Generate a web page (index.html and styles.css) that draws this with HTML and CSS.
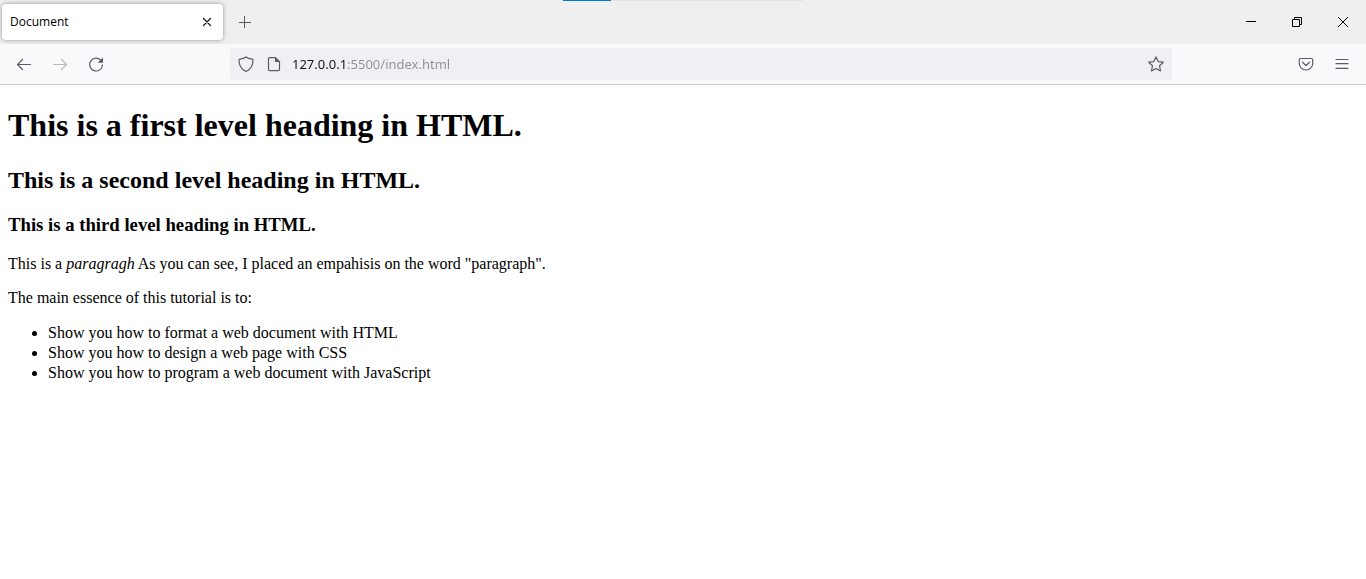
FILE: index.html
```html
<!DOCTYPE html>
<html lang="en">
<head>
<meta charset="utf-8">
<title>Document</title>
<link rel="stylesheet" href="styles.css">
</head>
<body>
<header class="browser">
  <div class="tab-strip">
    <div class="progress"><div class="progress-value"></div></div>
    <div class="tab">
      <span class="tab-title">Document</span>
      <button class="tab-close" type="button" aria-label="Close tab">
        <svg width="10" height="10" viewBox="0 0 10 10"><path d="M1.500 1.500l7 7M8.500 1.500l-7 7"/></svg>
      </button>
    </div>
    <button class="new-tab" type="button" aria-label="New tab">
      <svg width="12" height="12" viewBox="0 0 12 12"><path d="M5.500 0v12M0 6.500h12"/></svg>
    </button>
    <div class="window-buttons">
      <button class="window-button" type="button" aria-label="Minimize">
        <svg width="10" height="10" viewBox="0 0 10 10"><path d="M0 4.500h10"/></svg>
      </button>
      <button class="window-button" type="button" aria-label="Restore">
        <svg width="10" height="10" viewBox="0 0 10 10"><path d="M0.500 2.500h7v7h-7zM2.500 2.500v-2h7v7h-2"/></svg>
      </button>
      <button class="window-button" type="button" aria-label="Close window">
        <svg width="10" height="10" viewBox="0 0 10 10"><path d="M0 0l10 10M10 0L0 10"/></svg>
      </button>
    </div>
  </div>
  <div class="toolbar">
    <nav class="nav-buttons">
      <button class="icon-button" type="button" aria-label="Back">
        <svg width="16" height="16" viewBox="0 0 16 16"><path d="M14.500 8.500h-13M6.500 3.500l-5 5 5 5"/></svg>
      </button>
      <button class="icon-button" type="button" aria-label="Forward" disabled>
        <svg width="16" height="16" viewBox="0 0 16 16"><path d="M1.500 8.500h13M9.500 3.500l5 5-5 5"/></svg>
      </button>
      <button class="icon-button" type="button" aria-label="Reload">
        <svg width="16" height="16" viewBox="0 0 16 16"><path d="M14.500 9A6.400 6.400 0 1 1 12.800 4.200"/><path class="solid" d="M15 1.500v5.300H9.700z"/></svg>
      </button>
    </nav>
    <div class="address-bar">
      <button class="address-icon" type="button" aria-label="Tracking protection">
        <svg width="16" height="16" viewBox="0 0 16 16"><path d="M8 0.900C9.500 2 12 2.800 14.200 3.200 14.900 3.400 15 3.700 15 4.200 14.900 9.500 12.500 13.500 8 15.500 3.500 13.500 1.100 9.500 1 4.200 1 3.700 1.100 3.400 1.800 3.200 4 2.800 6.500 2 8 0.900z"/></svg>
      </button>
      <button class="address-icon" type="button" aria-label="Site information">
        <svg width="16" height="16" viewBox="0 0 16 16"><path d="M3.600 1.600h5.900l4 4v7.900a1.100 1.100 0 0 1-1.100 1.100H3.600a1.100 1.100 0 0 1-1.100-1.100V2.700a1.100 1.100 0 0 1 1.100-1.100z"/><path class="solid" d="M9 1l5 5H9z"/></svg>
      </button>
      <input class="address-input" type="text" aria-label="Address" value="127.0.0.1:5500/index.html">
      <button class="address-icon" type="button" aria-label="Bookmark this page">
        <svg width="16" height="16" viewBox="0 0 16 16"><path d="M8 0.900l2.200 4.700 5.100.6-3.800 3.500 1 5.200L8 12.400l-4.500 2.500 1-5.200L.7 6.200l5.100-.6z"/></svg>
      </button>
    </div>
    <div class="tools">
      <button class="icon-button" type="button" aria-label="Save to Pocket">
        <svg width="16" height="16" viewBox="0 0 16 16"><path d="M2.500 2.500h11a1.200 1.200 0 0 1 1.200 1.200v3.800a6.700 6.500 0 0 1-13.400 0V3.700a1.200 1.200 0 0 1 1.200-1.200z"/><path d="M4.500 6.200L8 9.500l3.500-3.300"/></svg>
      </button>
      <button class="icon-button" type="button" aria-label="Application menu">
        <svg width="16" height="16" viewBox="0 0 16 16"><path d="M2 3.500h12M2 7.700h12M2 12.300h12"/></svg>
      </button>
    </div>
  </div>
</header>
<main class="document">
  <h1>This is a first level heading in HTML.</h1>
  <h2>This is a second level heading in HTML.</h2>
  <h3>This is a third level heading in HTML.</h3>
  <p>This is a <em>paragragh</em> As you can see, I placed an empahisis on the word "paragraph".</p>
  <p>The main essence of this tutorial is to:</p>
  <ul>
    <li>Show you how to format a web document with HTML</li>
    <li>Show you how to design a web page with CSS</li>
    <li>Show you how to program a web document with JavaScript</li>
  </ul>
</main>
</body>
</html>
```
FILE: styles.css
```css
* {
  box-sizing: border-box;
}

body {
  margin: 0;
  background: #fff;
  color: #000;
  font: 16px/18px "Liberation Serif", "Times New Roman", serif;
}

button,
input {
  margin: 0;
  padding: 0;
  border: 0;
  background: none;
  color: inherit;
}

button {
  display: flex;
  align-items: center;
  justify-content: center;
}

svg {
  display: block;
  fill: none;
  stroke: currentColor;
  stroke-width: 1.2;
  stroke-linejoin: round;
  stroke-linecap: round;
}

.solid {
  fill: currentColor;
  stroke: none;
}

.browser {
  border-bottom: 1px solid #ccccce;
  color: #5b5b66;
  font-family: "Open Sans", "Noto Sans", sans-serif;
}

.tab-strip {
  position: relative;
  display: flex;
  align-items: center;
  height: 44px;
  padding-left: 2px;
  background: #efefef;
}

.progress {
  position: absolute;
  top: 0;
  left: 50%;
  width: 241px;
  height: 1px;
  margin-left: -120px;
  background: #e4e4e4;
}

.progress-value {
  width: 20%;
  height: 100%;
  background: #0078d7;
}

.tab {
  display: flex;
  align-items: center;
  justify-content: space-between;
  width: 221px;
  height: 36px;
  padding: 0 4px 0 8px;
  border-radius: 4px;
  background: #fff;
  box-shadow: 0 0 4px rgba(0, 0, 0, 0.4);
  color: #15141a;
}

.tab-title {
  color: #000;
  font-size: 12px;
}

.tab-close {
  width: 24px;
  height: 24px;
}

.new-tab {
  width: 36px;
  height: 36px;
  margin-left: 4px;
}

.new-tab svg,
.window-button svg {
  overflow: visible;
  stroke-width: 1;
  stroke-linecap: butt;
  stroke-linejoin: miter;
}

.window-buttons {
  display: flex;
  margin-left: auto;
  color: #000;
}

.window-button {
  width: 46px;
  height: 44px;
}

.toolbar {
  display: grid;
  grid-template-columns: 230px 1fr 194px;
  align-items: center;
  height: 40px;
  background: #f9f9fb;
}

.nav-buttons {
  display: flex;
  padding-left: 6px;
}

.tools {
  display: flex;
  justify-content: flex-end;
  padding-right: 6px;
}

.icon-button {
  width: 36px;
  height: 32px;
}

.icon-button:disabled {
  opacity: 0.4;
}

.address-bar {
  display: flex;
  align-items: center;
  height: 32px;
  padding: 0 2px;
  border-radius: 4px;
  background: #f0f0f4;
}

.address-icon {
  width: 28px;
  height: 28px;
}

.address-input {
  flex: 1;
  min-width: 0;
  height: 28px;
  margin-left: 4px;
  font: 13px "Noto Sans", "Open Sans", sans-serif;
  color: transparent;
  background: linear-gradient(to right, #15141a 56px, #8f8f98 56px);
  background-clip: text;
}

.document {
  padding: 0 8px;
}

.document h1 {
  margin: 21px 0;
  font-size: 32px;
  line-height: 38px;
}

.document h2 {
  margin: 20px 0;
  font-size: 24px;
  line-height: 30px;
}

.document h3 {
  margin: 20px 0;
  line-height: 20px;
}

.document p {
  margin: 16px 0;
}

.document ul {
  margin: 16px 0;
  padding-left: 40px;
  line-height: 20px;
}
```
